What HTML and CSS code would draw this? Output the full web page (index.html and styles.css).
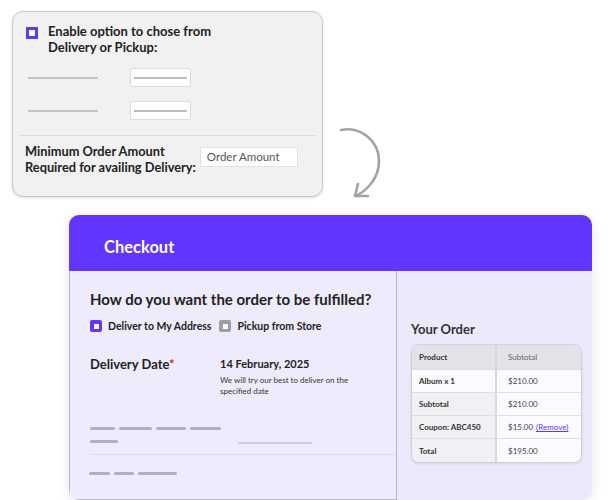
FILE: index.html
```html
<!DOCTYPE html>
<html>
<head>
<meta charset="utf-8">
<link rel="stylesheet" href="styles.css">
</head>
<body>
<div class="stage">
  <div class="settings">
    <div class="opt">
      <span class="box"></span>
      <div class="opt-text">Enable option to chose from<br>Delivery or Pickup:</div>
    </div>
    <div class="frow"><span class="fline"></span><span class="finput"><span class="finner"></span></span></div>
    <div class="frow"><span class="fline"></span><span class="finput"><span class="finner"></span></span></div>
    <div class="sdiv"></div>
    <div class="minrow">
      <div class="mintext">Minimum Order Amount<br>Required for availing Delivery:</div>
      <div class="amount">Order Amount</div>
    </div>
  </div>

  <svg class="arrow" width="60" height="80" viewBox="0 0 60 80">
    <path d="M10 9 C 30 5, 48 20, 48 40 C 48 56, 38 68, 25 75" fill="none" stroke="#a3a3a3" stroke-width="2.6" stroke-linecap="round"/>
    <path d="M27 63 L 24 75 L 37 75" fill="none" stroke="#a3a3a3" stroke-width="2.6" stroke-linecap="round" stroke-linejoin="round"/>
  </svg>

  <div class="checkout">
    <div class="co-head">Checkout</div>
    <div class="co-body">
      <div class="co-left">
        <h2 class="q">How do you want the order to be fulfilled?</h2>
        <div class="choices">
          <span class="ch"><span class="cb cb-on"></span>Deliver to My Address</span>
          <span class="ch"><span class="cb cb-off"></span>Pickup from Store</span>
        </div>
        <div class="ddrow">
          <div class="ddlabel">Delivery Date<span class="req">*</span></div>
          <div class="ddval">
            <div class="date">14 February, 2025</div>
            <div class="note">We will try our best to deliver on the<br>specified date</div>
          </div>
        </div>
        <div class="ph">
          <div class="ph-left">
            <div class="dashes"><span class="d" style="width:25px"></span><span class="d" style="width:33px"></span><span class="d" style="width:30px"></span><span class="d" style="width:31px"></span></div>
            <div class="dashes"><span class="d" style="width:28px"></span></div>
          </div>
          <span class="thin"></span>
        </div>
        <div class="ldiv"></div>
        <div class="dashes bottom"><span class="d" style="width:21px"></span><span class="d" style="width:20px"></span><span class="d" style="width:39px"></span></div>
      </div>
      <div class="co-right">
        <div class="yo">Your Order</div>
        <div class="tbl">
          <div class="tr th"><div class="c1">Product</div><div class="c2">Subtotal</div></div>
          <div class="tr"><div class="c1 w">Album x 1</div><div class="c2">$210.00</div></div>
          <div class="tr"><div class="c1">Subtotal</div><div class="c2">$210.00</div></div>
          <div class="tr"><div class="c1">Coupon: ABC450</div><div class="c2">$15.00 <span class="rm">(Remove)</span></div></div>
          <div class="tr last"><div class="c1">Total</div><div class="c2">$195.00</div></div>
        </div>
      </div>
    </div>
  </div>
</div>
</body>
</html>
```

FILE: styles.css
```css
* { box-sizing: border-box; }
html, body { margin: 0; padding: 0; background: #ffffff; }
body { font-family: "Lato", "Inter", sans-serif; color: #222; width: 610px; height: 500px; overflow: hidden; }
.stage { position: relative; width: 610px; height: 500px; padding-top: 11px; }

.settings {
  margin-left: 12px; width: 311px; height: 186px;
  background: #f1f1f1; border: 1px solid #c9c9c9; border-radius: 11px;
  box-shadow: 0 1px 3px rgba(0,0,0,0.12);
  padding-top: 11px;
}
.opt { display: flex; gap: 10px; padding-left: 13px; }
.box { width: 12px; height: 12px; border: 3px solid #6236ff; background: #fff; margin-top: 4px; flex: none; }
.opt-text { font-weight: 700; font-size: 13px; line-height: 16px; color: #222; }
.frow { display: flex; align-items: center; padding-left: 15px; margin-top: 13px; height: 19px; }
.frow + .frow { margin-top: 14px; }
.fline { width: 70px; height: 2px; background: #c3c3c3; }
.finput { margin-left: 32px; width: 61px; height: 19px; background: #fff; border: 1px solid #dcdcdc; border-radius: 2px; display: flex; align-items: center; justify-content: center; }
.finner { width: 53px; height: 2px; background: #bdbdbd; }
.sdiv { height: 1px; background: #dcdcdc; margin: 15px 6px 0 6px; }
.minrow { display: flex; padding-left: 12px; margin-top: 7px; gap: 4px; }
.mintext { font-weight: 700; font-size: 12.8px; line-height: 16px; color: #222; }
.amount { width: 98px; height: 20px; background: #fff; border: 1px solid #e2e2e2; font-size: 11.5px; color: #555; padding-left: 6px; line-height: 18px; margin-top: 4px; }

.arrow { position: absolute; left: 331px; top: 121px; }

.checkout {
  margin-left: 69px; margin-top: 18px; width: 523px; height: 285px;
  border-radius: 10px; overflow: hidden; background: #ece9fd;
  box-shadow: 0 2px 12px rgba(60,40,140,0.12);
  display: flex; flex-direction: column;
}
.co-head { height: 56px; background: #6236ff; color: #fff; font-weight: 700; font-size: 16.5px; display: flex; align-items: center; padding-left: 35px; padding-top: 8px; flex: none; }
.co-body { display: flex; flex: 1; }
.co-left { width: 328px; background: #eeecfc; border-left: 1px solid #b9b7c7; border-right: 1px solid #b9b7c7; border-bottom: 1px solid #b9b7c7; padding-left: 20px; padding-top: 18px; }
.q { margin: 0; font-size: 15px; font-weight: 700; line-height: 20px; color: #222; }
.choices { display: flex; gap: 8px; margin-top: 10px; font-size: 10.5px; font-weight: 700; line-height: 14px; color: #222; }
.ch { display: flex; align-items: center; gap: 6px; }
.cb { width: 12px; height: 12px; border-radius: 2px; display: flex; align-items: center; justify-content: center; }
.cb::after { content: ""; width: 5px; height: 5px; background: #fff; }
.cb-on { background: #6236ff; }
.cb-off { background: #9e9e9e; }
.ddrow { display: flex; margin-top: 23px; }
.ddlabel { width: 130px; font-size: 13px; font-weight: 700; line-height: 16px; color: #222; }
.req { color: #e11; }
.date { font-size: 11px; font-weight: 700; line-height: 16px; }
.note { font-size: 8px; line-height: 11px; color: #333; margin-top: 3px; }
.ph { display: flex; align-items: flex-end; margin-top: 30px; }
.ph-left { width: 148px; }
.dashes { display: flex; gap: 4px; height: 3px; }
.dashes + .dashes { margin-top: 10px; }
.d { height: 3px; background: #b1afc0; border-radius: 2px; }
.thin { width: 74px; height: 2px; background: #d0cee0; margin-bottom: -1px; }
.ldiv { height: 1px; background: #dddbea; margin-top: 11px; }
.dashes.bottom { margin-top: 17px; margin-left: -1px; gap: 4px; }

.co-right { flex: 1; padding-left: 14px; padding-top: 50px; }
.yo { font-size: 13px; font-weight: 700; color: #333; line-height: 16px; }
.tbl { margin-top: 7px; width: 171px; border: 1px solid #d2d1da; border-radius: 8px; overflow: hidden; background: #fbfbff; box-shadow: 0 1px 3px rgba(0,0,0,0.1); font-size: 8px; color: #333; }
.tr { display: flex; height: 23px; border-bottom: 1px solid #dddce4; }
.tr.last { border-bottom: none; }
.tr.th { height: 25px; background: #e3e2e8; }
.c1 { width: 85px; border-right: 2px solid #d8d7df; padding-left: 7px; display: flex; align-items: center; font-weight: 700; background: #f1f0f4; }
.c1.w { background: #fbfbff; }
.th .c1 { background: #e3e2e8; }
.c2 { flex: 1; padding-left: 11px; display: flex; align-items: center; gap: 3px; color: #444; }
.th .c2 { color: #666; }
.rm { color: #6236ff; text-decoration: underline; }
```
